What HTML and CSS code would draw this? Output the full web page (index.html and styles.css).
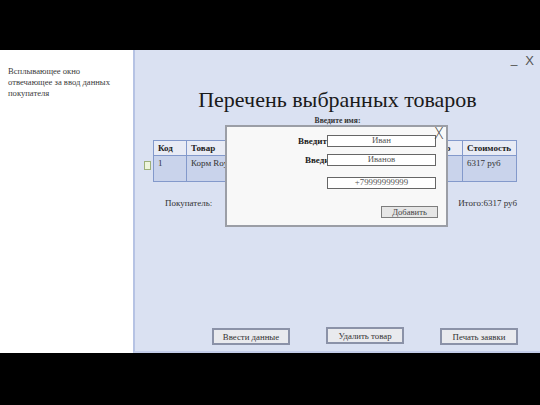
FILE: index.html
```html
<!DOCTYPE html>
<html lang="ru">
<head>
<meta charset="utf-8">
<title>Перечень выбранных товаров</title>
<link rel="stylesheet" href="styles.css">
</head>
<body>
<div class="stage">
  <aside class="note">Всплывающее окно отвечающее за ввод данных покупателя</aside>
  <main class="window">
    <div class="winctl"><span class="min">_</span><span class="close">X</span></div>
    <h1 class="title">Перечень выбранных товаров</h1>
    <div class="prompt">Введите имя:</div>
    <div class="table-row">
      <span class="check"></span>
      <table class="goods">
        <colgroup>
          <col class="c1"><col class="c2"><col class="c3"><col class="c4"><col class="c5">
        </colgroup>
        <thead>
          <tr><th>Код</th><th>Товар</th><th>Цена</th><th>Количество</th><th>Стоимость</th></tr>
        </thead>
        <tbody>
          <tr><td>1</td><td>Корм Royal Canin</td><td>6317 руб</td><td>1</td><td>6317 руб</td></tr>
        </tbody>
      </table>
    </div>
    <div class="summary"><span>Покупатель:</span><span>Итого:6317 руб</span></div>
    <div class="actions">
      <button class="btn">Ввести данные</button>
      <button class="btn raised">Удалить товар</button>
      <button class="btn">Печать заявки</button>
    </div>

    <div class="popup">
      <span class="popup-x">X</span>
      <div class="field"><span class="lbl w1">Введите имя:</span><span class="inp">Иван</span></div>
      <div class="field f2"><span class="lbl w2">Введите фамилию:</span><span class="inp">Иванов</span></div>
      <div class="field f3"><span class="inp">+79999999999</span></div>
      <div class="field f4"><button class="add">Добавить</button></div>
    </div>
  </main>
</div>
</body>
</html>
```

FILE: styles.css
```css
* { box-sizing: border-box; }
html, body { margin: 0; padding: 0; background: #000; }
body { width: 540px; height: 405px; overflow: hidden; font-family: "Liberation Serif", "Times New Roman", serif; color: #222; }

.stage { margin-top: 50px; height: 303px; display: flex; }

.note {
  width: 133px; background: #fff; padding: 16px 8px 0 8px;
  font-size: 8.6px; line-height: 11px; color: #3a3a3a;
}

.window {
  flex: 1; position: relative; background: #dae1f2;
  border-left: 2px solid #b6c3e4; border-bottom: 2px solid #c3cde9;
  display: flex; flex-direction: column;
}

.winctl { height: 18px; display: flex; justify-content: flex-end; align-items: flex-end; gap: 8px; padding-right: 6px; font-family: "Liberation Sans", Arial, sans-serif; color: #555; font-size: 13px; line-height: 14px; }
.winctl .min { font-size: 12px; line-height: 12px; transform: translateY(-3px); }

.title { margin: 19px 0 0; font-weight: normal; font-size: 22px; line-height: 26px; text-align: center; color: #1a1a1a; }

.prompt { margin-top: 3px; text-align: center; font-weight: bold; font-size: 7.6px; line-height: 10px; color: #333; }

.table-row { margin-top: 14px; display: flex; align-items: flex-start; padding-left: 9px; }
.check { width: 7px; height: 9px; margin-top: 21px; margin-right: 2px; background: #eef5dc; border: 1px solid #9db07a; }

.goods { border-collapse: collapse; table-layout: fixed; width: 363px; font-size: 9px; }
.goods .c1 { width: 33px; } .goods .c2 { width: 114px; } .goods .c3 { width: 98px; } .goods .c4 { width: 64px; } .goods .c5 { width: 54px; }
.goods th, .goods td { border: 1px solid #8399cb; text-align: left; padding: 0 4px; white-space: nowrap; overflow: hidden; }
.goods th { height: 15px; background: #e8ebf5; font-weight: bold; color: #222; }
.goods td { height: 26px; background: #c9d3eb; vertical-align: top; padding-top: 2px; color: #333; }

.summary { margin-top: 15px; display: flex; justify-content: space-between; padding: 0 23px 0 30px; font-size: 9px; line-height: 12px; color: #333; }

.actions { margin-top: auto; margin-bottom: 6px; display: flex; justify-content: flex-end; gap: 36px; padding-right: 22px; align-items: flex-start; }
.btn {
  width: 78px; height: 17px; padding: 0; font-family: inherit; font-size: 8.8px; color: #333;
  background: #e9eaee; border: 2px solid #8b92a8; margin-top: 1px;
}
.btn.raised { margin-top: 0; }

.popup {
  position: absolute; left: 90px; top: 75px; width: 223px; height: 102px;
  background: #f8f8f8; border: 2px solid #9b9ea6;
  padding: 8px 10px 0 0;
}
.popup-x { position: absolute; right: 2px; top: 0; font-family: "DejaVu Sans", sans-serif; font-weight: 200; font-size: 15px; line-height: 14px; color: #444; }
.field { display: flex; justify-content: flex-end; align-items: center; }
.field.f2 { margin-top: 7px; }
.field.f3 { margin-top: 11px; }
.field.f4 { margin-top: 17px; margin-right: -2px; }
.lbl { overflow: hidden; white-space: nowrap; font-weight: bold; font-size: 9px; color: #222; }
.lbl.w1 { width: 29px; }
.lbl.w2 { width: 22px; }
.inp {
  width: 109px; height: 12px; background: #fff; border: 1.5px solid #666;
  font-size: 8.8px; line-height: 9px; color: #555; text-align: center;
}
.add {
  width: 57px; height: 12px; padding: 0; font-family: inherit; font-size: 8.6px; line-height: 8px; color: #444;
  background: #e6e6e6; border: 1.5px solid #7d7d7d;
}
```
